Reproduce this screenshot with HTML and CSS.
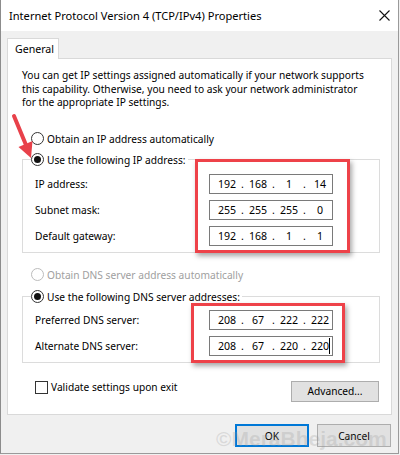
FILE: index.html
```html
<!DOCTYPE html>
<html>
<head>
<meta charset="utf-8">
<link rel="stylesheet" href="styles.css">
</head>
<body>
<div class="window">
  <div class="titlebar">
    <span class="title">Internet Protocol Version 4 (TCP/IPv4) Properties</span>
    <svg class="close" width="11" height="11" viewBox="0 0 11 11"><path d="M0.5 0.5 L10.5 10.5 M10.5 0.5 L0.5 10.5" stroke="#111" stroke-width="1.1" fill="none"/></svg>
  </div>
  <div class="body">
    <div class="tabs"><div class="tab">General</div></div>
    <div class="panel">
      <p class="intro">You can get IP settings assigned automatically if your network supports<br>this capability. Otherwise, you need to ask your network administrator<br>for the appropriate IP settings.</p>
      <div class="radio-row first"><span class="radio"></span><span>Obtain an IP address automatically</span></div>
      <fieldset class="group g1">
        <legend class="radio-row"><span class="radio checked"></span><span>Use the following IP address:</span></legend>
        <div class="field"><span class="label">IP address:</span><div class="ip"><span class="seg">192</span><span class="dot">.</span><span class="seg">168</span><span class="dot">.</span><span class="seg">1</span><span class="dot">.</span><span class="seg">14</span></div></div>
        <div class="field"><span class="label">Subnet mask:</span><div class="ip"><span class="seg">255</span><span class="dot">.</span><span class="seg">255</span><span class="dot">.</span><span class="seg">255</span><span class="dot">.</span><span class="seg">0</span></div></div>
        <div class="field"><span class="label">Default gateway:</span><div class="ip"><span class="seg">192</span><span class="dot">.</span><span class="seg">168</span><span class="dot">.</span><span class="seg">1</span><span class="dot">.</span><span class="seg">1</span></div></div>
      </fieldset>
      <div class="radio-row disabled"><span class="radio"></span><span>Obtain DNS server address automatically</span></div>
      <fieldset class="group g2">
        <legend class="radio-row"><span class="radio checked"></span><span>Use the following DNS server addresses:</span></legend>
        <div class="field"><span class="label">Preferred DNS server:</span><div class="ip"><span class="seg">208</span><span class="dot">.</span><span class="seg">67</span><span class="dot">.</span><span class="seg">222</span><span class="dot">.</span><span class="seg">222</span></div></div>
        <div class="field"><span class="label">Alternate DNS server:</span><div class="ip"><span class="seg">208</span><span class="dot">.</span><span class="seg">67</span><span class="dot">.</span><span class="seg">220</span><span class="dot">.</span><span class="seg">220<span class="caret"></span></span></div></div>
      </fieldset>
      <div class="bottom-row">
        <div class="check-row"><span class="checkbox"></span><span>Validate settings upon exit</span></div>
        <div class="btn adv">Advanced...</div>
      </div>
    </div>
    <div class="actions">
      <div class="btn default">OK</div>
      <div class="btn">Cancel</div>
    </div>
  </div>
  <div class="hl hl1"></div>
  <div class="hl hl2"></div>
  <svg class="arrow" width="50" height="60" viewBox="0 0 50 60">
    <line x1="14" y1="16" x2="26" y2="45" stroke="#e8414a" stroke-width="4" stroke-linecap="round"/>
    <polygon points="32.5,41 18.5,47 31,58" fill="#e8414a"/>
  </svg>
  <div class="watermark">©MeraBheja.com</div>
</div>
</body>
</html>
```
FILE: styles.css
```css
* { box-sizing: border-box; }
html, body { margin: 0; padding: 0; }
body {
  width: 400px;
  height: 455px;
  overflow: hidden;
  font-family: "Noto Sans", "Open Sans", sans-serif;
  font-size: 10.2px;
  color: #000;
  background: #f0f0f0;
}
.window {
  position: relative;
  width: 399px;
  height: 454px;
  border-left: 1px solid #8c8c8c;
  border-right: 1px solid #9a9a9a;
  border-bottom: 1px solid #9a9a9a;
  background: #f0f0f0;
  overflow: hidden;
}
.titlebar {
  height: 31px;
  background: #fff;
  display: flex;
  align-items: center;
  justify-content: space-between;
  padding: 0 8px 0 8px;
}
.title { font-size: 11.1px; }
.body { padding: 7px 6px 0 6px; }
.tabs { display: flex; height: 20px; position: relative; z-index: 1; }
.tab {
  width: 52px;
  height: 21px;
  background: #fff;
  border: 1px solid #d9d9d9;
  border-bottom: none;
  padding: 2px 0 0 7px;
  line-height: 16px;
  font-size: 10.6px;
}
.panel {
  background: #fff;
  border: 1px solid #d9d9d9;
  height: 357px;
  padding: 0 11px 0 14px;
}
.intro {
  margin: 10px 0 0 0;
  line-height: 13.5px;
  white-space: nowrap;
}
.radio-row {
  display: flex;
  align-items: center;
  height: 16px;
  gap: 3px;
  white-space: nowrap;
}
.radio-row.first { margin: 21px 0 0 9px; }
.radio {
  width: 13px;
  height: 13px;
  border-radius: 50%;
  border: 1px solid #333;
  background: #fff;
  display: inline-flex;
  align-items: center;
  justify-content: center;
  flex: none;
}
.radio.checked::after {
  content: "";
  width: 7px;
  height: 7px;
  border-radius: 50%;
  background: #111;
}
.radio-row.disabled { color: #a0a0a0; margin: 14px 0 0 9px; }
.radio-row.disabled .radio { border-color: #bcbcbc; }
.group {
  width: 358px;
  margin: 0;
  border: 1px solid #dcdcdc;
  padding: 6px 0 6px 12px;
  min-width: 0;
}
.group legend { padding: 0 2px 0 0; margin-left: -4px; }
.g1 { margin-top: 5px; }
.g2 { margin-top: 6px; padding-top: 5px; }
.field {
  display: flex;
  align-items: center;
  height: 20px;
  margin-bottom: 6px;
}
.field:last-child { margin-bottom: 0; }
.label { width: 174px; }
.ip {
  width: 124px;
  height: 20px;
  border: 1px solid #7a7a7a;
  display: flex;
  align-items: center;
  padding-left: 5px;
  font-size: 10.6px;
}
.seg { width: 24px; text-align: center; position: relative; }
.dot { width: 7px; text-align: center; }
.caret {
  position: absolute;
  right: 2px;
  top: -1px;
  width: 1px;
  height: 16px;
  background: #000;
}
.bottom-row {
  display: flex;
  justify-content: space-between;
  align-items: flex-start;
  margin-top: 18px;
}
.check-row {
  display: flex;
  align-items: center;
  gap: 3px;
  margin-left: 13px;
  height: 13px;
  white-space: nowrap;
}
.checkbox {
  width: 13px;
  height: 13px;
  border: 1px solid #333;
  background: #fff;
  flex: none;
}
.btn {
  height: 21px;
  background: #e1e1e1;
  border: 1px solid #adadad;
  display: flex;
  align-items: center;
  justify-content: center;
}
.adv { width: 88px; margin-right: 1px; }
.actions {
  display: flex;
  justify-content: flex-end;
  gap: 8px;
  margin-top: 9px;
  padding-right: 1px;
}
.actions .btn { width: 74px; height: 23px; }
.btn.default { border: 2px solid #0078d7; }
.hl {
  position: absolute;
  border: 3px solid #ee4249;
  box-shadow: 2px 3px 5px rgba(0, 0, 0, 0.35);
}
.hl1 { left: 194px; top: 159px; width: 155px; height: 94px; }
.hl2 { left: 190px; top: 303px; width: 154px; height: 60px; }
.arrow { position: absolute; left: -1px; top: 100px; }
.watermark {
  position: absolute;
  left: 215px;
  top: 427px;
  font-family: "Liberation Sans", Arial, sans-serif;
  font-weight: bold;
  font-size: 21px;
  color: rgba(150, 150, 150, 0.25);
  white-space: nowrap;
  pointer-events: none;
}
```
